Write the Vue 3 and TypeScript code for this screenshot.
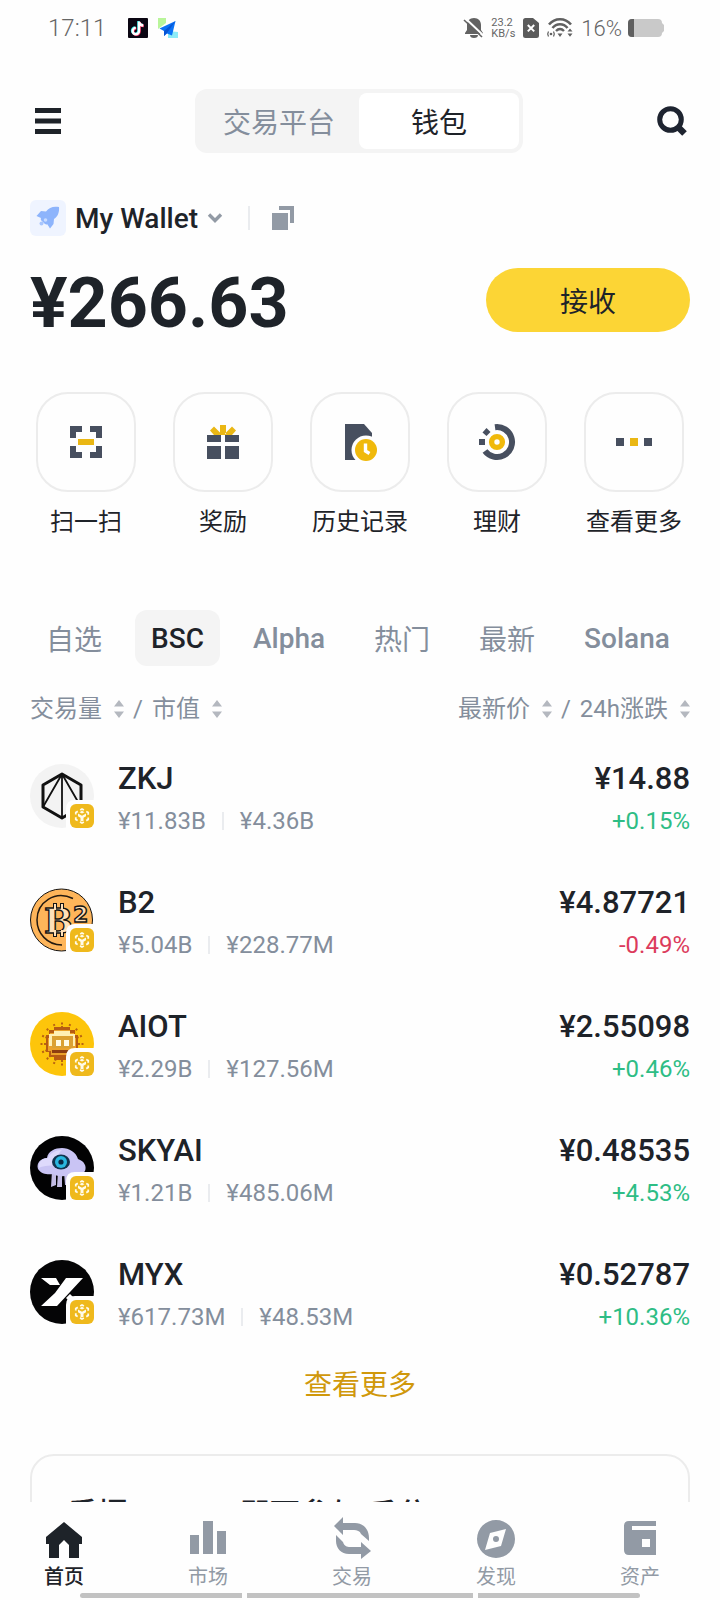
<script setup lang="ts">
import { ref } from 'vue'

interface Token {
  symbol: string
  volume: string
  cap: string
  price: string
  change: string
}

const mode = ref<'exchange' | 'wallet'>('wallet')
const actions = [
  { id: 'scan', label: '扫一扫' },
  { id: 'gift', label: '奖励' },
  { id: 'history', label: '历史记录' },
  { id: 'earn', label: '理财' },
  { id: 'more', label: '查看更多' },
]
const tabs = ['自选', 'BSC', 'Alpha', '热门', '最新', 'Solana']
const activeTab = ref('BSC')
const sorts = [
  ['交易量', '市值'],
  ['最新价', '24h涨跌'],
]
const tokens: Token[] = [
  { symbol: 'ZKJ', volume: '¥11.83B', cap: '¥4.36B', price: '¥14.88', change: '+0.15%' },
  { symbol: 'B2', volume: '¥5.04B', cap: '¥228.77M', price: '¥4.87721', change: '-0.49%' },
  { symbol: 'AIOT', volume: '¥2.29B', cap: '¥127.56M', price: '¥2.55098', change: '+0.46%' },
  { symbol: 'SKYAI', volume: '¥1.21B', cap: '¥485.06M', price: '¥0.48535', change: '+4.53%' },
  { symbol: 'MYX', volume: '¥617.73M', cap: '¥48.53M', price: '¥0.52787', change: '+10.36%' },
]
const navItems = [
  { id: 'home', label: '首页' },
  { id: 'market', label: '市场' },
  { id: 'trade', label: '交易' },
  { id: 'discover', label: '发现' },
  { id: 'assets', label: '资产' },
]
const activeNav = ref('home')
const rays = Array.from({ length: 16 }, (_, i) => i * 22.5)
</script>

<template>
  <div class="screen">
    <div class="status">
      <span class="clock">17:11</span>
      <svg class="app-icon first" width="20" height="20" viewBox="0 0 20 20" aria-hidden="true">
        <rect width="20" height="20" rx="1" fill="#0b0612" />
        <g fill="none" stroke-width="2.4">
          <path d="M10.4 3v9.6a3.2 3.2 0 1 1-3.2-3.2M10.4 3.4c.4 2 2 3.400 4.300 3.600" stroke="#25e5e5" />
          <path d="M11.600 4v9.600a3.200 3.200 0 1 1-3.200-3.200M11.600 4.400c.4 2 2 3.400 4.300 3.600" stroke="#f5265a" />
          <path d="M11 3.500v9.600a3.200 3.200 0 1 1-3.200-3.200M11 3.900c.4 2 2 3.400 4.300 3.600" stroke="#fff" />
        </g>
      </svg>
      <svg class="app-icon" width="20" height="20" viewBox="0 0 20 20" aria-hidden="true">
        <path d="M0 0h8v5l-8 6z" fill="#b9f59a" />
        <path d="M10 13l10 1v6H10z" fill="#8debf7" />
        <path d="M17.500 3 1.500 10.500 6 13v5l3-2.500 5 2z" fill="#0a72f5" />
        <path d="M17.500 3 6 13v5l3-3z" fill="#0754d4" />
      </svg>
      <span class="grow"></span>
      <svg width="20" height="22" viewBox="0 0 20 22" aria-hidden="true">
        <path d="M10 1c4.500 0 7 3.200 7 7v5l2 3v1H1v-1l2-3V8c0-3.800 2.500-7 7-7zM6 18h8a4 3 0 0 1-8 0z" fill="#636363" />
        <path d="M1 1 20 19" stroke="#fff" stroke-width="2" />
        <path d="M0 3 18 20" stroke="#636363" stroke-width="1.600" />
      </svg>
      <span class="speed"><span>23.2</span><span>KB/s</span></span>
      <svg class="sim" width="16" height="20" viewBox="0 0 16 20" aria-hidden="true">
        <path d="M2.500 0H10l6 5v12.500a2.500 2.500 0 0 1-2.500 2.500h-11A2.500 2.500 0 0 1 0 17.500v-15A2.500 2.500 0 0 1 2.500 0z" fill="#5b5b5b" />
        <path d="m4.800 7 6.400 6.400m0-6.400-6.400 6.400" stroke="#fff" stroke-width="2" />
      </svg>
      <svg class="wifi" width="26" height="20" viewBox="0 0 26 20" aria-hidden="true">
        <g fill="none" stroke="#606060">
          <path d="M2 6.500C8-.5 18-.5 24 6.500" stroke-width="2.600" />
          <path d="M5.500 10c4-5 11-5 15 0" stroke-width="2.600" />
          <path d="M9 13c2.500-2.600 5.500-2.600 8 0" stroke-width="2.400" />
          <path d="M1.500 13.500q-1.600 2.500 0 5M6.500 13.500q1.600 2.500 0 5" stroke-width="1.300" />
        </g>
        <circle cx="4" cy="16" r="1.300" fill="#606060" />
        <path d="M10.500 15.500h5L13 19zM20.500 13.500h5L23 10.500zM20.500 15.500h5L23 18.800z" fill="#606060" />
      </svg>
      <span class="percent">16%</span>
      <svg width="36" height="18" viewBox="0 0 36 18" aria-hidden="true">
        <path d="M4 0h26q4 0 4 4l2 2v6l-2 2q0 4-4 4H4q-4 0-4-4V4q0-4 4-4z" fill="#c9c9c9" />
        <path d="M6 0v18H4q-4 0-4-4V4q0-4 4-4z" fill="#5f5f5f" />
      </svg>
    </div>

    <main class="content">
      <header class="top">
        <button class="plain" aria-label="菜单">
          <svg width="28" height="28" viewBox="0 0 28 28"><path d="M1 1h26v5H1zM1 11.500h26v5H1zM1 22h26v5H1z" fill="#1e2329" /></svg>
        </button>
        <div class="segment">
          <button :class="{ on: mode === 'exchange' }" @click="mode = 'exchange'">交易平台</button>
          <button :class="{ on: mode === 'wallet' }" @click="mode = 'wallet'">钱包</button>
        </div>
        <button class="plain" aria-label="搜索">
          <svg width="32" height="32" viewBox="0 0 32 32" fill="none" stroke="#1e2430">
            <circle cx="14.500" cy="14.500" r="10.800" stroke-width="5" />
            <path d="m22.500 22.500 6 6" stroke-width="6.500" />
          </svg>
        </button>
      </header>

      <div class="account">
        <button class="plain wallet">
          <svg width="36" height="36" viewBox="0 0 36 36" aria-hidden="true">
            <rect width="36" height="36" rx="6" fill="#eff4ff" />
            <path d="M29 7c-6-1-10 .5-13 4.500l-5-.5-4.500 5 4.500 2c-.5 1.200-.2 2 .6 2.800l3.400 3.200c.8.500 1.500.5 2.300.2L20 28.500l3.500-4.500.5-5c4-2.500 5.500-7 5-12z" fill="#8db4fc" />
            <circle cx="11.500" cy="23.500" r="2" fill="#a9c6fd" />
            <circle cx="15.500" cy="20" r="1.800" fill="#c9dcff" />
          </svg>
          <span>My Wallet</span>
          <svg width="16" height="12" viewBox="0 0 16 12" aria-hidden="true"><path d="m2 2.500 6 6 6-6" fill="none" stroke="#929aa5" stroke-width="3.400" /></svg>
        </button>
        <span class="bar"></span>
        <button class="plain" aria-label="复制">
          <svg width="24" height="24" viewBox="0 0 24 24"><path d="M0 7h16v17H0zM7 0h15v17h-4V4H7z" fill="#929aa5" /></svg>
        </button>
      </div>

      <div class="balance">
        <strong>¥266.63</strong>
        <button class="receive">接收</button>
      </div>

      <div class="actions">
        <button v-for="a in actions" :key="a.id" class="action">
          <span class="tile">
            <svg width="36" height="36" viewBox="0 0 36 36" aria-hidden="true">
              <template v-if="a.id === 'scan'">
                <path d="M2 2h12v6H8v6H2zM22 2h12v12h-6V8h-6zM2 22h6v6h6v6H2zM28 22h6v12H22v-6h6z" fill="#474f5f" />
                <path d="M10 15h16v6H10z" fill="#eab714" />
              </template>
              <template v-else-if="a.id === 'gift'">
                <path d="M2 11h14v7H2zM20 11h14v7H20zM2 22h14v13H2zM20 22h14v13H20z" fill="#474f5f" />
                <path d="M15 1h6v10h-6zM9 2.500l7 7-1.500 1.500H9L5 6.500zM27 2.500l-7 7 1.500 1.500H27l4-4.500z" fill="#eab714" />
              </template>
              <template v-else-if="a.id === 'history'">
                <path d="M3 0h19l8 9v15L18 36H3z" fill="#474f5f" />
                <circle cx="24" cy="26" r="14.500" fill="#fefefe" />
                <circle cx="24" cy="26" r="11" fill="#f0b90b" />
                <path d="M23.500 19.500V27l4 2.500" fill="none" stroke="#fff" stroke-width="3.400" />
              </template>
              <template v-else-if="a.id === 'earn'">
                <path d="M16 3.200A15 15 0 1 1 6 27" fill="none" stroke="#474f5f" stroke-width="6" />
                <path d="M0 15h6v6H0zM3.500 8.500 7.500 4l4 4L7.500 12z" fill="#474f5f" />
                <circle cx="18" cy="18" r="5.400" fill="none" stroke="#f0b90b" stroke-width="5.400" />
              </template>
              <template v-else>
                <path d="M0 14h8v8H0zM28 14h8v8h-8z" fill="#474f5f" />
                <path d="M14 14h8v8h-8z" fill="#eab714" />
              </template>
            </svg>
          </span>
          <span>{{ a.label }}</span>
        </button>
      </div>

      <div class="tabs">
        <button v-for="t in tabs" :key="t" :class="{ on: t === activeTab }" @click="activeTab = t">{{ t }}</button>
      </div>

      <div class="sorts">
        <div v-for="(pair, p) in sorts" :key="p" class="pair">
          <template v-for="(label, i) in pair" :key="label">
            <span v-if="i">/</span>
            <button class="plain sort">
              {{ label }}
              <svg width="10" height="18" viewBox="0 0 10 18" aria-hidden="true"><path d="M5 0l5 6.500H0zM0 11.500h10L5 18z" fill="#b4b8bf" /></svg>
            </button>
          </template>
        </div>
      </div>

      <ul class="tokens">
        <li v-for="t in tokens" :key="t.symbol">
          <svg class="logo" width="64" height="64" viewBox="0 0 64 64" aria-hidden="true">
            <g v-if="t.symbol === 'ZKJ'">
              <circle cx="32" cy="32" r="32" fill="#f3f3f3" />
              <path d="M32 10 51 21v22L32 54 13 43V21z" fill="none" stroke="#111" stroke-width="3" stroke-linejoin="round" />
              <path d="M32 10v44M32 10 13 43M32 10l19 33" fill="none" stroke="#111" stroke-width="1.800" />
            </g>
            <g v-else-if="t.symbol === 'B2'">
              <circle cx="31.500" cy="32" r="31" fill="#feb55a" stroke="#141414" />
              <path d="M43 10.500C25 2 7 14 7 32c0 13 10 25 25 25" fill="none" stroke="#241a10" stroke-width="1.500" />
              <path d="M25 15v6m7-6v6m-7 22v6m7-6v6" stroke="#141414" stroke-width="4" />
              <text x="14" y="45" class="coin-b">B</text>
              <path d="M25 16v6m7-6v6m-7 20v6m7-6v6" stroke="#ffe0b8" stroke-width="2" />
              <text x="43" y="34" class="coin-two">2</text>
            </g>
            <g v-else-if="t.symbol === 'AIOT'">
              <circle cx="32" cy="32" r="32" fill="#fdc50b" />
              <g stroke="#b96413" stroke-dasharray="2 1.500">
                <path v-for="r in rays" :key="r" d="M32 16V10" stroke-width="2" :transform="`rotate(${r} 32 32)`" />
              </g>
              <path d="M24 15h16v3h5v5h3v17h-3v5h-5v3H24v-3h-5v-5h-3V23h3v-5h5z" fill="#b75c13" />
              <path d="M24 18h16v3h4v5h2v13h-3v4H21v-4h-3V26h2v-5h4z" fill="#eba22b" />
              <path d="M24 19h16v3h5v12H19V22h5z" fill="#fff0b5" />
              <path d="M22 24h21v12H22z" fill="#dba133" />
              <path d="M26 28h5v6h-5zM34 28h5v6h-5z" fill="#fffbe5" />
              <path d="M22 38h20v3H22z" fill="#8e3e11" />
            </g>
            <g v-else-if="t.symbol === 'SKYAI'">
              <circle cx="32" cy="32" r="32" fill="#020203" />
              <path d="M22 35h4v14l-5 2zM28 36h4v15h-5zM34 36h4v13h-3z" fill="#c3bce5" />
              <path d="M17 22c1-7 8-10 15-10s14 4 16 11c6 2 9 7 7 12-3 5-9 4-12 3-7 3-15 3-20 0-5 1-12 0-15-5-2-6 3-11 9-11z" fill="#c9c4f4" />
              <path d="M18 22c2-5 8-8 14-8-3 2-7 9-3 15-8 1-15 0-20 3-1-6 3-10 9-10z" fill="#dedafc" />
              <ellipse cx="31" cy="26" rx="9" ry="7.500" fill="#12344f" />
              <circle cx="31" cy="26" r="6" fill="#29b6df" />
              <circle cx="31" cy="26" r="2.600" fill="#0b2845" />
            </g>
            <g v-else>
              <circle cx="32" cy="32" r="32" fill="#050506" />
              <path d="M11 18h15l4 7H20zM36 18h17L27 46H11l14-13z" fill="#fff" />
              <path d="m36 38 8 8h8L40 34z" fill="#fff" />
            </g>
            <path d="M36 64V45q0-9 9-9h19v28z" fill="#fefefe" />
            <rect x="40" y="40" width="24" height="24" rx="6" fill="#efb91c" />
            <path d="M52 45 58.200 48.500v7L52 59l-6.200-3.500v-7z" fill="none" stroke="#fffbea" stroke-width="1.800" stroke-dasharray="4.400 2.700" stroke-dashoffset="2.200" />
            <path d="M48 49.500 52 51.700l4-2.200v2.700L53.500 53.700V57h-3v-3.300L48 52.200z" fill="#fffbea" />
            <path d="m49.500 48.200 2.500-1.400 2.500 1.400-2.500 1.400z" fill="#fffbea" />
          </svg>
          <div class="info">
            <span class="name">{{ t.symbol }}</span>
            <span class="sub">{{ t.volume }}<i></i>{{ t.cap }}</span>
          </div>
          <div class="quote">
            <span class="name">{{ t.price }}</span>
            <span class="sub" :class="t.change.startsWith('-') ? 'down' : 'up'">{{ t.change }}</span>
          </div>
        </li>
      </ul>

      <a href="#" class="all">查看更多</a>

      <section class="promo">手握 Tokens 即可参与 瓜分</section>
    </main>

    <nav class="nav">
      <button v-for="n in navItems" :key="n.id" class="plain" :class="{ on: n.id === activeNav }" @click="activeNav = n.id">
        <svg width="40" height="40" viewBox="0 0 40 40" fill="currentColor" aria-hidden="true">
          <path v-if="n.id === 'home'" d="M20 2 38 17v7h-3v14H25V25l-5-5-5 5v13H5V24H2v-7z" />
          <path v-else-if="n.id === 'market'" d="M2 15h9v19H2zM15 1h10v33H15zM29 11h9v23h-9z" />
          <template v-else-if="n.id === 'trade'">
            <path d="M11-3v6h12c8 0 14 6 14 15v3L29 14c-1-3-4-4-7-4H11v5L2 6z" />
            <path d="M29 39v-5H17C9 34 4 28 4 21v-6l7 7c1 4 4 5 7 5h11v-5l10 9z" />
          </template>
          <path v-else-if="n.id === 'discover'" fill-rule="evenodd" d="M20 0a19 19 0 1 1 0 38 19 19 0 0 1 0-38zM30 9 14 13 9 30l16-4zM20 16a3 3 0 1 1 0 6 3 3 0 0 1 0-6z" />
          <path v-else fill-rule="evenodd" d="M9 1h27v5H12v4h24v25H9q-5 0-5-5V6q0-5 5-5zM22 19v8h8v-8z" />
        </svg>
        <span>{{ n.label }}</span>
      </button>
    </nav>
    <div class="home-bar"><span></span><span></span><span></span></div>
  </div>
</template>

<style>
body {
  background: #fefefe;
}
</style>

<style scoped>
.screen {
  display: flex;
  flex-direction: column;
  height: 100vh;
  box-sizing: border-box;
  overflow: hidden;
  background: #fefefe;
  color: #1e2329;
  font-family: Roboto, "Noto Sans CJK SC", sans-serif;
}
button {
  font: inherit;
  color: inherit;
  border: 0;
  padding: 0;
  background: none;
  cursor: pointer;
}
svg {
  display: block;
  flex: none;
  overflow: visible;
}
.plain {
  display: flex;
  align-items: center;
}
.status {
  display: flex;
  align-items: center;
  flex: none;
  height: 56px;
  padding: 0 56px 0 48px;
  color: #666;
}
.clock {
  font-size: 24px;
  font-weight: 300;
}
.app-icon {
  margin-left: 10px;
}
.app-icon.first {
  margin-left: 22px;
}
.grow {
  flex: 1;
}
.speed {
  display: flex;
  flex-direction: column;
  margin: 0 8px 0 7px;
  font-size: 11px;
  line-height: 11px;
}
.wifi {
  margin: 0 8px;
}
.percent {
  margin-right: 6px;
  font-size: 22px;
  font-weight: 300;
}
.content {
  flex: 1;
  min-height: 0;
  overflow: hidden;
  padding: 33px 30px 0;
}
.top {
  display: flex;
  align-items: center;
  justify-content: space-between;
  padding: 0 2px 0 4px;
}
.segment {
  display: grid;
  grid-template-columns: 1fr 1fr;
  width: 328px;
  height: 64px;
  box-sizing: border-box;
  padding: 4px;
  border-radius: 12px;
  background: #f4f4f4;
  font-size: 28px;
  color: #848e9c;
}
.segment .on {
  border-radius: 8px;
  background: #fff;
  color: #1e2329;
}
.account {
  display: flex;
  align-items: center;
  margin-top: 46px;
  height: 38px;
}
.wallet {
  gap: 9px;
  font-size: 28px;
  font-weight: 500;
}
.bar {
  width: 2px;
  height: 24px;
  margin: 0 22px 0 25px;
  background: #eaecef;
}
.balance {
  display: flex;
  align-items: center;
  justify-content: space-between;
  height: 64px;
  margin-top: 31px;
}
.balance strong {
  padding-top: 6px;
  font-size: 70px;
  line-height: 64px;
}
.receive {
  width: 204px;
  height: 64px;
  border-radius: 32px;
  background: #fcd535;
  font-size: 28px;
}
.actions {
  display: flex;
  justify-content: space-between;
  margin-top: 60px;
  padding: 0 6px;
}
.action {
  display: flex;
  flex-direction: column;
  align-items: center;
  width: 100px;
  gap: 13px;
  font-size: 24px;
  line-height: 34px;
  white-space: nowrap;
}
.tile {
  display: grid;
  place-items: center;
  width: 100px;
  height: 100px;
  box-sizing: border-box;
  border: 2px solid #ececec;
  border-radius: 32px;
}
.tabs {
  display: flex;
  gap: 17px;
  margin-top: 71px;
  color: #848e9c;
  font-size: 28px;
}
.tabs button {
  height: 56px;
  padding: 0 16px;
  border-radius: 12px;
  white-space: nowrap;
}
.tabs button:nth-child(2),
.tabs button:nth-child(3),
.tabs button:nth-child(6) {
  font-weight: 500;
}
.tabs .on {
  background: #f4f4f4;
  color: #1e2329;
}
.sorts {
  display: flex;
  justify-content: space-between;
  margin-top: 25px;
  line-height: 36px;
  font-size: 24px;
  color: #848e9c;
}
.pair {
  display: flex;
  align-items: center;
  gap: 9px;
}
.sort {
  gap: 12px;
}
.tokens {
  display: flex;
  flex-direction: column;
  gap: 48px;
  margin: 31px 0 0;
  padding: 0;
  list-style: none;
}
.tokens li {
  display: flex;
  align-items: center;
  height: 76px;
}
.info,
.quote {
  display: flex;
  flex-direction: column;
  gap: 6px;
  padding-top: 4px;
}
.logo {
  margin-right: 24px;
}
.info {
  flex: 1;
}
.quote {
  align-items: flex-end;
}
.name {
  font-size: 31px;
  line-height: 40px;
  font-weight: 500;
}
.sub {
  display: flex;
  align-items: center;
  font-size: 24px;
  line-height: 32px;
  color: #848e9c;
}
.sub i {
  width: 2px;
  height: 18px;
  margin: 0 16px;
  background: #eaecef;
}
.sub.up {
  color: #2ebd85;
}
.sub.down {
  color: #dc3b5c;
}
.coin-b,
.coin-two {
  font-family: "DejaVu Serif", serif;
  font-weight: 700;
  font-size: 34px;
  fill: #ffe0b8;
  stroke: #141414;
  stroke-width: 1.4px;
}
.coin-two {
  font-family: "DejaVu Sans", sans-serif;
  font-size: 22px;
}
.all {
  display: block;
  margin-top: 36px;
  text-align: center;
  font-size: 28px;
  line-height: 40px;
  color: #d0980b;
  text-decoration: none;
}
.promo {
  margin-top: 48px;
  padding: 36px;
  border: 2px solid #ececec;
  border-radius: 24px;
  font-size: 30px;
  line-height: 44px;
  font-weight: 500;
}
.nav {
  display: flex;
  justify-content: space-between;
  flex: none;
  padding: 18px 52px 0 36px;
  color: #929aa5;
  font-size: 20px;
  line-height: 30px;
}
.nav button {
  flex-direction: column;
  gap: 2px;
  width: 56px;
}
.nav .on {
  color: #1e2329;
  font-weight: 500;
}
.home-bar {
  display: grid;
  grid-template-columns: 162fr 226fr 162fr;
  gap: 5px;
  flex: none;
  padding: 1px 80px 2px;
}
.home-bar span {
  height: 5px;
  background: #c2c2c2;
}
.home-bar span:first-child {
  border-radius: 3px 0 0 3px;
}
.home-bar span:last-child {
  border-radius: 0 3px 3px 0;
}
</style>
